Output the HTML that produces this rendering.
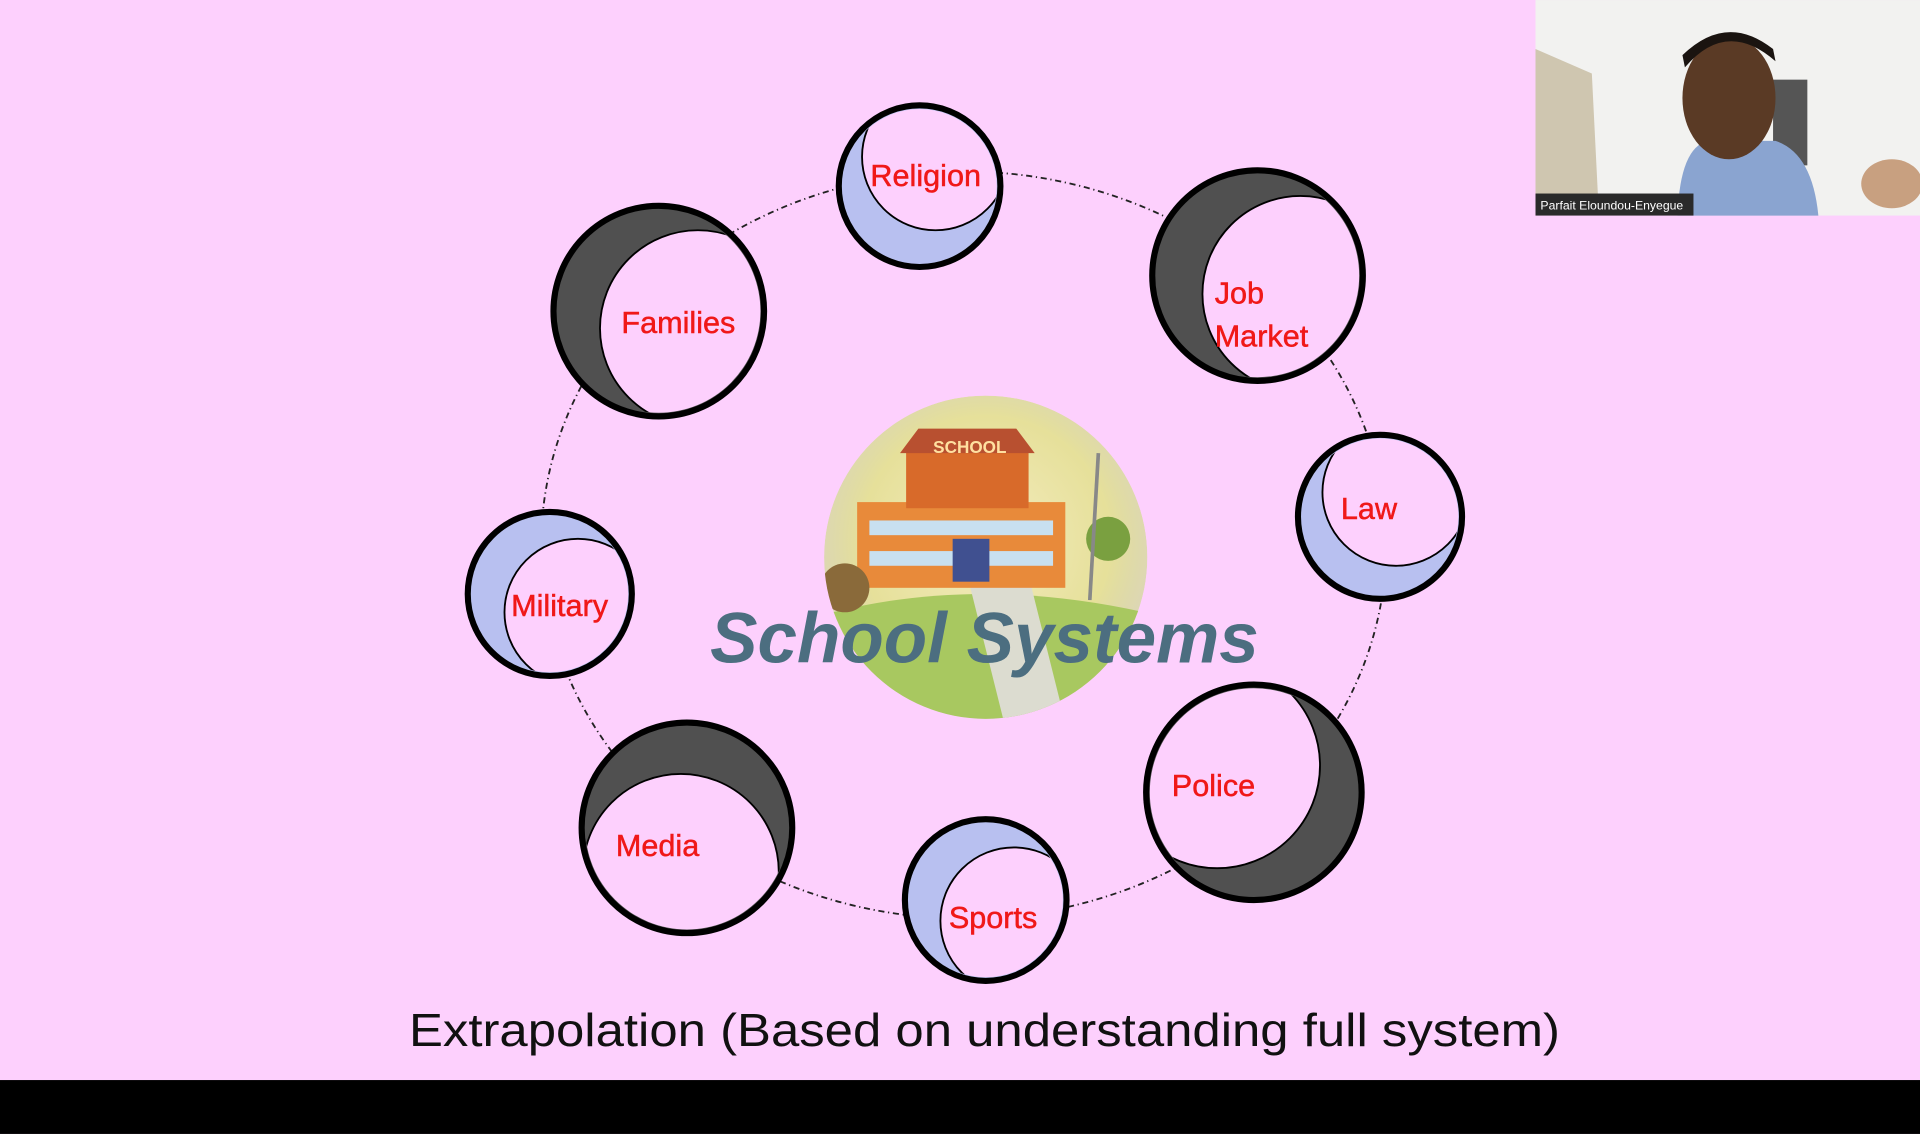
<!DOCTYPE html>
<html><head><meta charset="utf-8"><style>
html,body{margin:0;padding:0;background:#fdd0fd;width:1920px;height:1134px;overflow:hidden}
svg{display:block}
</style></head><body>
<svg width="1920" height="1134" viewBox="0 0 1568 926" xmlns="http://www.w3.org/2000/svg">
<defs>
<radialGradient id="sg" cx="50%" cy="45%" r="55%"><stop offset="0" stop-color="#f4ecc0"/><stop offset="0.7" stop-color="#e6e09a"/><stop offset="1" stop-color="#c8d890" stop-opacity="0.6"/></radialGradient>
<clipPath id="cc"><circle cx="805" cy="455" r="132"/></clipPath>
</defs>
<rect width="1568" height="926" fill="#fdd0fd"/>
<rect y="882" width="1568" height="44" fill="#000"/>
<ellipse cx="787" cy="445" rx="345" ry="305" fill="none" stroke="#222" stroke-width="1.5" stroke-dasharray="5,3,1,3"/>
<g clip-path="url(#cc)">
<circle cx="805" cy="455" r="132" fill="url(#sg)"/>
<path d="M680 500 Q800 470 935 500 L935 590 L680 590Z" fill="#a8c860"/>
<path d="M790 470 L840 470 L870 590 L820 590Z" fill="#dcdcd0"/>
<rect x="700" y="410" width="170" height="70" fill="#e88a3a"/>
<rect x="740" y="365" width="100" height="50" fill="#d86a2a"/>
<polygon points="735,370 845,370 830,350 750,350" fill="#b85030"/>
<text x="792" y="370" font-family="Liberation Sans" font-size="14" font-weight="bold" fill="#ffe0a0" text-anchor="middle">SCHOOL</text>
<rect x="710" y="425" width="150" height="12" fill="#c8e0f0"/>
<rect x="710" y="450" width="150" height="12" fill="#c8e0f0"/>
<rect x="778" y="440" width="30" height="35" fill="#405090"/>
<circle cx="690" cy="480" r="20" fill="#8a6a3a"/>
<circle cx="905" cy="440" r="18" fill="#7aa040"/>
<line x1="897" y1="370" x2="890" y2="490" stroke="#888" stroke-width="3"/>
</g>
<text x="804" y="541" font-family="Liberation Sans" font-size="58" font-style="italic" font-weight="bold" fill="#4c6e80" text-anchor="middle">School Systems</text>

<g stroke="#000" stroke-width="5">
<circle cx="751" cy="152" r="66" fill="#b8c0f0"/>
<circle cx="538" cy="254" r="86" fill="#505050"/>
<circle cx="1027" cy="225" r="86" fill="#505050"/>
<circle cx="1127" cy="422" r="67" fill="#b8c0f0"/>
<circle cx="449" cy="485" r="67" fill="#b8c0f0"/>
<circle cx="561" cy="676" r="86" fill="#505050"/>
<circle cx="805" cy="735" r="66" fill="#b8c0f0"/>
<circle cx="1024" cy="647" r="88" fill="#505050"/>
</g>
<g fill="#fdd0fd" stroke="#000" stroke-width="1.5">
<clipPath id="c1"><circle cx="751" cy="152" r="63"/></clipPath>
<circle cx="764" cy="128" r="60" clip-path="url(#c1)"/>
<clipPath id="c2"><circle cx="538" cy="254" r="83"/></clipPath>
<circle cx="570" cy="268" r="80" clip-path="url(#c2)"/>
<clipPath id="c3"><circle cx="1027" cy="225" r="83"/></clipPath>
<circle cx="1062" cy="240" r="80" clip-path="url(#c3)"/>
<clipPath id="c4"><circle cx="1127" cy="422" r="64"/></clipPath>
<circle cx="1140" cy="402" r="60" clip-path="url(#c4)"/>
<clipPath id="c5"><circle cx="449" cy="485" r="64"/></clipPath>
<circle cx="472" cy="500" r="60" clip-path="url(#c5)"/>
<clipPath id="c6"><circle cx="561" cy="676" r="83"/></clipPath>
<circle cx="556" cy="712" r="80" clip-path="url(#c6)"/>
<clipPath id="c7"><circle cx="805" cy="735" r="63"/></clipPath>
<circle cx="828" cy="752" r="60" clip-path="url(#c7)"/>
<clipPath id="c8"><circle cx="1024" cy="647" r="85"/></clipPath>
<circle cx="994" cy="625" r="84" clip-path="url(#c8)"/>
</g>
<g font-family="Liberation Sans" font-size="25" fill="#f01818" text-anchor="middle" stroke="#f01818" stroke-width="0.4">
<text x="756" y="152">Religion</text>
<text x="554" y="272">Families</text>
<text x="992" y="248" text-anchor="start">Job</text>
<text x="992" y="283" text-anchor="start">Market</text>
<text x="1118" y="424">Law</text>
<text x="457" y="503">Military</text>
<text x="537" y="699">Media</text>
<text x="811" y="758">Sports</text>
<text x="991" y="650">Police</text>
</g>
<text x="804" y="854" font-family="Liberation Sans" font-size="38" fill="#111" text-anchor="middle" textLength="940" lengthAdjust="spacingAndGlyphs">Extrapolation (Based on understanding full system)</text>

<rect x="1254" y="0" width="314" height="176" fill="#f2f2f0"/>
<polygon points="1254,40 1300,60 1305,160 1254,176" fill="#cfc6b0"/>
<rect x="1448" y="65" width="28" height="70" fill="#555"/>
<path d="M1370 176 Q1372 120 1395 115 L1450 115 Q1480 125 1485 176Z" fill="#8aa4d0"/>
<ellipse cx="1412" cy="80" rx="38" ry="50" fill="#5a3a25"/>
<path d="M1376 55 Q1410 15 1450 50 L1448 40 Q1410 10 1374 45Z" fill="#1a1410"/>
<ellipse cx="1545" cy="150" rx="25" ry="20" fill="#c8a080"/>
<rect x="1254" y="158" width="129" height="18" fill="#2a2a2a"/>
<text x="1258" y="171" font-family="Liberation Sans" font-size="10" fill="#fff">Parfait Eloundou-Enyegue</text>
</svg>
</body></html>
